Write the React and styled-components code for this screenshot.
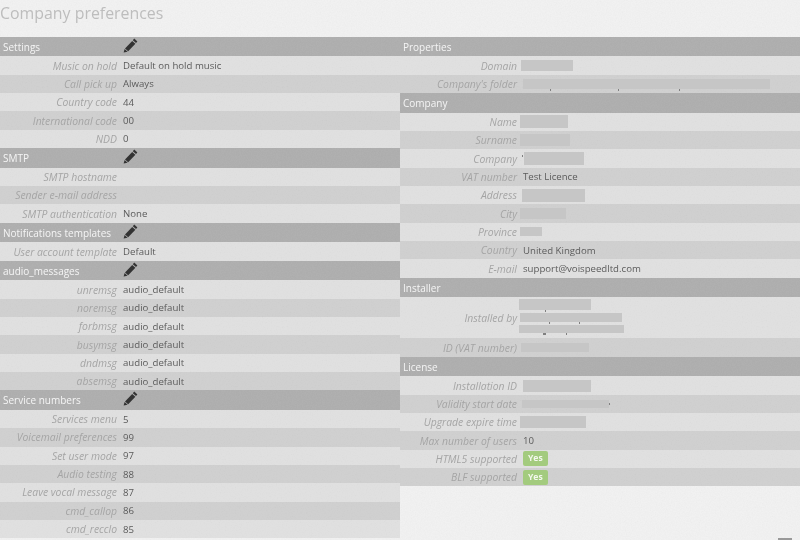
import styled, { createGlobalStyle } from "styled-components";

const noise = encodeURIComponent(
  `<svg xmlns="http://www.w3.org/2000/svg" width="240" height="240"><filter id="n"><feTurbulence type="fractalNoise" baseFrequency="0.8" numOctaves="2" stitchTiles="stitch"/><feColorMatrix values="0 0 0 0 0.5 0 0 0 0 0.5 0 0 0 0 0.5 0 0 0 0.5 -0.18"/></filter><rect width="240" height="240" filter="url(#n)" opacity="0.35"/></svg>`
);

const GlobalStyle = createGlobalStyle`
  html, body {
    margin: 0;
    height: 540px;
    overflow: hidden;
    background-color: #f1f1f1;
    background-image: url("data:image/svg+xml,${noise}");
    font-family: "Open Sans", "Liberation Sans", sans-serif;
  }
`;

const Page = styled.div`
  width: 800px;
  height: 540px;
  overflow: hidden;
  position: relative;
  filter: blur(0.4px);
`;

const Title = styled.h1`
  margin: 0;
  height: 36.8px;
  padding-top: 2px;
  box-sizing: border-box;
  font-size: 15.9px;
  line-height: 22px;
  font-weight: 400;
  color: #bdbdbd;
`;

const Columns = styled.div`
  display: grid;
  grid-template-columns: 400px 400px;
  align-items: start;
`;

const Header = styled.div`
  height: 19.67px;
  display: flex;
  align-items: center;
  background: rgba(0, 0, 0, 0.27);
  color: #f4f4f4;
  font-size: 10px;
  font-weight: 400;
`;

const HeaderTitle = styled.span`
  width: 120px;
  padding-left: 3px;
  box-sizing: border-box;
`;

const EditIcon = styled.svg`
  width: 15px;
  height: 15px;
  margin: -3px 0 0 3px;
  fill: #333;
`;

const Row = styled.div`
  min-height: 18.33px;
  display: flex;
  align-items: center;
  background: ${(props) => (props.$even ? "rgba(0,0,0,0.135)" : "rgba(0,0,0,0.065)")};
`;

const Label = styled.span`
  width: 117px;
  flex-shrink: 0;
  text-align: right;
  font-size: 10.4px;
  font-style: italic;
  color: #a4a4a4;
  white-space: nowrap;
`;

const Value = styled.span`
  margin-left: 6px;
  font-size: 9.65px;
  color: #5a5a5a;
  white-space: nowrap;
`;

const Stack = styled.div`
  display: flex;
  flex-direction: column;
  gap: 3px;
  padding: 2px 0 5px;
`;

const Redacted = styled.span`
  display: block;
  position: relative;
  flex-shrink: 0;
  width: ${(props) => props.$w}px;
  height: ${(props) => props.$h || 12}px;
  margin-left: ${(props) => props.$x}px;
  background: #c6c6c6;
`;

const Tick = styled.i`
  position: absolute;
  top: ${(props) => (props.$side ? "3px" : "100%")};
  left: ${(props) => props.$at}px;
  width: ${(props) => props.$w || 1}px;
  height: 2px;
  background: #808080;
`;

const Badge = styled.span`
  margin-left: 6px;
  padding: 0 5px;
  height: 15px;
  line-height: 15px;
  border-radius: 2px;
  background: #a3cb7e;
  color: #f4f8ee;
  font-size: 8.6px;
  font-weight: 700;
`;

const Corner = styled.div`
  position: absolute;
  right: 8px;
  bottom: 0;
  width: 14px;
  height: 2px;
  background: #999;
`;

const Pencil = () => (
  <EditIcon viewBox="0 0 15 15">
    <path d="M11.2 0.6 14.4 3.4 13 5 9.8 2.2Z" />
    <path d="M9.2 2.9 12.4 5.7 5.2 13.2 2 10.4Z" />
    <path d="M1.6 11 4.6 13.7 0.6 14.6Z" />
  </EditIcon>
);

const Section = ({ title, editable, children }) => (
  <>
    <Header>
      <HeaderTitle>{title}</HeaderTitle>
      {editable && <Pencil />}
    </Header>
    {children}
  </>
);

const Rows = ({ items }) =>
  items.map(([label, value], i) => (
    <Row key={label} $even={i % 2 === 1}>
      <Label>{label}</Label>
      {value && <Value>{value}</Value>}
    </Row>
  ));

const App = () => {
  return (
    <Page>
      <GlobalStyle />
      <Title>Company preferences</Title>
      <Columns>
        <div>
          <Section title="Settings" editable>
            <Rows
              items={[
                ["Music on hold", "Default on hold music"],
                ["Call pick up", "Always"],
                ["Country code", "44"],
                ["International code", "00"],
                ["NDD", "0"],
              ]}
            />
          </Section>
          <Section title="SMTP" editable>
            <Rows
              items={[
                ["SMTP hostname"],
                ["Sender e-mail address"],
                ["SMTP authentication", "None"],
              ]}
            />
          </Section>
          <Section title="Notifications templates" editable>
            <Rows items={[["User account template", "Default"]]} />
          </Section>
          <Section title="audio_messages" editable>
            <Rows
              items={[
                ["unremsg", "audio_default"],
                ["noremsg", "audio_default"],
                ["forbmsg", "audio_default"],
                ["busymsg", "audio_default"],
                ["dndmsg", "audio_default"],
                ["absemsg", "audio_default"],
              ]}
            />
          </Section>
          <Section title="Service numbers" editable>
            <Rows
              items={[
                ["Services menu", "5"],
                ["Voicemail preferences", "99"],
                ["Set user mode", "97"],
                ["Audio testing", "88"],
                ["Leave vocal message", "87"],
                ["cmd_callop", "86"],
                ["cmd_recclo", "85"],
              ]}
            />
          </Section>
        </div>
        <div>
          <Section title="Properties">
            <Row>
              <Label>Domain</Label>
              <Redacted $x={4} $w={52} $h={11} />
            </Row>
            <Row $even>
              <Label>Company's folder</Label>
              <Redacted $x={6} $w={247} $h={10}>
                <Tick $at={27} />
                <Tick $at={95} />
                <Tick $at={156} />
              </Redacted>
            </Row>
          </Section>
          <Section title="Company">
            <Row>
              <Label>Name</Label>
              <Redacted $x={3} $w={48} $h={13} />
            </Row>
            <Row $even>
              <Label>Surname</Label>
              <Redacted $x={3} $w={50} $h={12} />
            </Row>
            <Row>
              <Label>Company</Label>
              <Redacted $x={7} $w={60} $h={13}>
                <Tick $side $at={-2} />
              </Redacted>
            </Row>
            <Row $even>
              <Label>VAT number</Label>
              <Value>Test Licence</Value>
            </Row>
            <Row>
              <Label>Address</Label>
              <Redacted $x={5} $w={63} $h={13} />
            </Row>
            <Row $even>
              <Label>City</Label>
              <Redacted $x={3} $w={46} $h={11} />
            </Row>
            <Row>
              <Label>Province</Label>
              <Redacted $x={3} $w={22} $h={9} />
            </Row>
            <Row $even>
              <Label>Country</Label>
              <Value>United Kingdom</Value>
            </Row>
            <Row>
              <Label>E-mail</Label>
              <Value>support@voispeedltd.com</Value>
            </Row>
          </Section>
          <Section title="Installer">
            <Row>
              <Label>Installed by</Label>
              <Stack>
                <Redacted $x={2} $w={72} $h={11}>
                  <Tick $at={26} />
                </Redacted>
                <Redacted $x={3} $w={102} $h={9}>
                  <Tick $at={29} />
                  <Tick $at={59} />
                </Redacted>
                <Redacted $x={2} $w={105} $h={8}>
                  <Tick $at={24} $w={3} />
                  <Tick $at={47} />
                </Redacted>
              </Stack>
            </Row>
            <Row $even>
              <Label>ID (VAT number)</Label>
              <Redacted $x={4} $w={68} $h={9} />
            </Row>
          </Section>
          <Section title="License">
            <Row>
              <Label>Installation ID</Label>
              <Redacted $x={6} $w={68} $h={12} />
            </Row>
            <Row $even>
              <Label>Validity start date</Label>
              <Redacted $x={5} $w={87} $h={8}>
                <Tick $side $at={87} />
              </Redacted>
            </Row>
            <Row>
              <Label>Upgrade expire time</Label>
              <Redacted $x={3} $w={66} $h={12} />
            </Row>
            <Row $even>
              <Label>Max number of users</Label>
              <Value>10</Value>
            </Row>
            <Row>
              <Label>HTML5 supported</Label>
              <Badge>Yes</Badge>
            </Row>
            <Row $even>
              <Label>BLF supported</Label>
              <Badge>Yes</Badge>
            </Row>
          </Section>
        </div>
      </Columns>
      <Corner />
    </Page>
  );
};

export default App;
